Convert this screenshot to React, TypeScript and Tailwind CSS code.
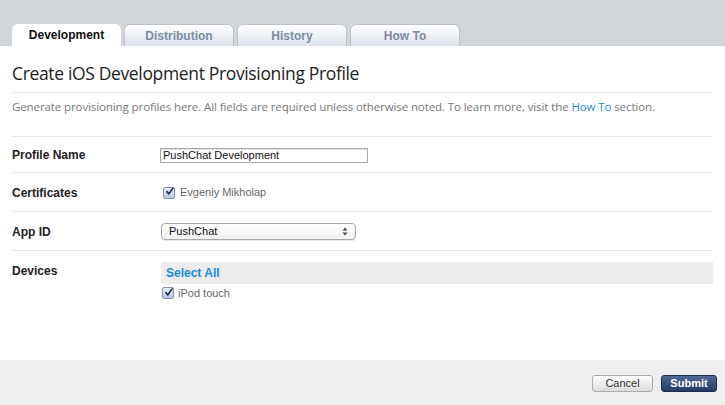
import React from "react";

const tabs = ["Development", "Distribution", "History", "How To"];

const Check: React.FC = () => (
  <span className="inline-flex w-[12px] h-[12px] rounded-[2px] border border-[#7f8fa8] bg-gradient-to-b from-[#e8eef8] to-[#b9c8e0] items-center justify-center">
    <svg width="11" height="11" viewBox="0 0 12 12" className="-mt-[2px] ml-[1px]">
      <path d="M2.5 6.2 L5 9.2 L10.5 1.5" fill="none" stroke="#1d2f57" strokeWidth="2.2" strokeLinecap="round" strokeLinejoin="round" />
    </svg>
  </span>
);

const Row: React.FC<{ label: string; h: string; children: React.ReactNode }> = ({ label, h, children }) => (
  <div className={`flex items-center border-b border-[#e3e8ef] pt-[1px] ${h}`}>
    <div className="w-[148px] text-[12px] font-bold text-[#222]">{label}</div>
    <div className="flex-1">{children}</div>
  </div>
);

const App: React.FC = () => {
  return (
    <div className="w-[725px] h-[405px] bg-white flex flex-col overflow-hidden font-['Liberation_Sans',Arial,sans-serif]">
      <div className="h-[46px] bg-[#d3d6d9] flex items-end pl-[12px] gap-[3px] shrink-0">
        {tabs.map((t, i) =>
          i === 0 ? (
            <div key={t} className="w-[109px] h-[22px] rounded-t-[6px] bg-white flex items-center justify-center text-[12px] font-bold text-[#111]">
              {t}
            </div>
          ) : (
            <div
              key={t}
              className="w-[110px] h-[22px] rounded-t-[6px] border border-b-0 border-[#bfc3c8] bg-gradient-to-b from-white to-[#dce2ec] flex items-center justify-center text-[12px] font-bold text-[#7d8ba5]"
            >
              {t}
            </div>
          )
        )}
      </div>

      <div className="flex-1 px-[12px] flex flex-col">
        <div className="h-[47px] border-b border-[#e3e6ea] flex items-end pb-[10px]">
          <h1 className="text-[17.5px] text-[#222] font-['Open_Sans',sans-serif] tracking-[-0.35px] leading-none">
            Create iOS Development Provisioning Profile
          </h1>
        </div>
        <div className="h-[44px] border-b border-[#e3e8ef] flex items-start pt-[5px]">
          <p className="text-[11.5px] text-[#777] font-['Open_Sans',sans-serif] tracking-[-0.1px]">
            Generate provisioning profiles here. All fields are required unless otherwise noted. To learn more, visit the{" "}
            <span className="text-[#1a8bd6]">How To</span> section.
          </p>
        </div>

        <Row label="Profile Name" h="h-[36px]">
          <div className="w-[208px] h-[15px] border border-[#a8a8a8] bg-white text-[11px] text-[#111] leading-[13px] pl-[2px] shadow-[inset_0_1px_1px_rgba(0,0,0,0.12)]">
            PushChat Development
          </div>
        </Row>
        <Row label="Certificates" h="h-[39px]">
          <div className="flex items-center gap-[5px] pl-[3px] text-[11px] text-[#666]">
            <Check />
            <span>Evgeniy Mikholap</span>
          </div>
        </Row>
        <Row label="App ID" h="h-[39px]">
          <div className="w-[195px] h-[17px] ml-[1px] rounded-[4px] border border-[#a9a9a9] bg-gradient-to-b from-white to-[#f0f0f0] flex items-center justify-between px-[7px] text-[11px] text-[#111] shadow-[0_1px_1px_rgba(0,0,0,0.1)]">
            <span>PushChat</span>
            <svg width="6" height="9" viewBox="0 0 6 9">
              <path d="M0.5 3.5 L3 0.5 L5.5 3.5 Z M0.5 5.5 L3 8.5 L5.5 5.5 Z" fill="#444" />
            </svg>
          </div>
        </Row>
        <div className="flex pt-[11px]">
          <div className="w-[148px] text-[12px] font-bold text-[#222]">Devices</div>
          <div className="flex-1 flex flex-col">
            <div className="h-[22px] ml-[1px] bg-[#ececec] flex items-center pl-[5px] text-[12px] font-bold text-[#1a8bd6]">
              Select All
            </div>
            <div className="flex items-center gap-[4px] pl-[2px] pt-[1px] text-[11px] text-[#666]">
              <Check />
              <span>iPod touch</span>
            </div>
          </div>
        </div>
      </div>

      <div className="h-[45px] bg-[#eeeeee] flex items-center justify-end gap-[8px] pr-[8px] shrink-0 pt-[1px]">
        <button className="w-[61px] h-[17px] rounded-[3px] border border-[#a9abae] bg-gradient-to-b from-white to-[#dcdcdc] text-[11px] text-[#333] leading-none">
          Cancel
        </button>
        <button className="w-[56px] h-[17px] rounded-[3px] border border-[#1d2e4b] bg-gradient-to-b from-[#4f6a93] to-[#243d65] text-[11px] font-bold text-white leading-none">
          Submit
        </button>
      </div>
    </div>
  );
};

export default App;
